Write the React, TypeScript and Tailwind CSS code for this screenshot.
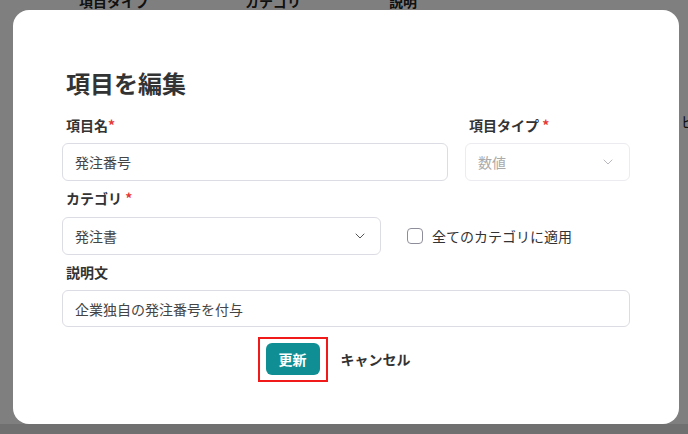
import { ChevronDown } from "lucide-react";

export default function App() {
  return (
    <div className="relative w-[688px] h-[434px] overflow-hidden bg-white font-['Noto_Sans_CJK_JP',sans-serif]">
      <div className="flex h-full flex-col">
        <div className="-mt-[9px] flex text-sm font-bold leading-5 text-[#222] whitespace-nowrap">
          <span className="ml-[79px]">項目タイプ</span>
          <span className="ml-[96px]">カテゴリ</span>
          <span className="ml-[88px]">説明</span>
        </div>
        <div className="mt-[100px] pl-[681px] whitespace-nowrap text-sm leading-5 text-[#222]">ピー</div>
        <div className="flex-1" />
        <div className="h-[10px] bg-[#e0e0e0]" />
      </div>

      <div className="absolute inset-0 flex items-center bg-black/50">
        <div className="ml-[13px] h-[414px] w-[666px] rounded-[16px] bg-white px-[49px] pt-[57px]">
          <h1 className="pl-1 text-2xl font-bold leading-8 text-[#333]">項目を編集</h1>

          <div className="mt-4 flex gap-[17px]">
            <div className="flex-1">
              <div className="pl-1 text-sm font-bold leading-5 text-[#333]">
                項目名<span className="text-[#e53935]">*</span>
              </div>
              <div className="mt-2 flex h-[38px] items-center rounded-md border border-[#dcdce4] px-3 text-sm text-[#444]">
                発注番号
              </div>
            </div>
            <div className="w-[165px]">
              <div className="pl-1 text-sm font-bold leading-5 text-[#333]">
                項目タイプ <span className="text-[#e53935]">*</span>
              </div>
              <div className="mt-2 flex h-[38px] items-center justify-between rounded-md border border-[#ececf0] pl-3 pr-[13px] text-sm text-[#aaa]">
                <span>数値</span>
                <ChevronDown size={16} strokeWidth={1.5} className="text-[#b8b8c0]" />
              </div>
            </div>
          </div>

          <div className="mt-[7px] pl-1 text-sm font-bold leading-5 text-[#333]">
            カテゴリ <span className="text-[#e53935]">*</span>
          </div>
          <div className="mt-[9px] flex items-center">
            <div className="flex h-[38px] w-[319px] items-center justify-between rounded-md border border-[#dcdce4] pl-3 pr-[12px] text-sm text-[#444]">
              <span>発注書</span>
              <ChevronDown size={16} strokeWidth={1.5} className="text-[#555]" />
            </div>
            <label className="ml-[26px] flex items-center gap-[9px] text-sm text-[#333]">
              <span className="h-[16px] w-[16px] rounded-[4px] border-[1.5px] border-[#8e8e9a] bg-white" />
              全てのカテゴリに適用
            </label>
          </div>

          <div className="mt-[7px] pl-1 text-sm font-bold leading-5 text-[#333]">説明文</div>
          <div className="mt-2 flex h-[37px] items-center rounded-md border border-[#dcdce4] px-3 text-sm text-[#444]">
            企業独自の発注番号を付与
          </div>

          <div className="mt-4 flex justify-center gap-[5px]">
            <div className="relative">
              <button className="h-[32px] w-[54px] rounded-md bg-[#0f8f94] text-sm font-bold text-white">更新</button>
              <div className="pointer-events-none absolute -left-[8px] -right-[8px] -top-[6px] -bottom-[7px] border-2 border-[#f01a1a]" />
            </div>
            <button className="h-[32px] px-4 text-sm font-bold text-[#333]">キャンセル</button>
          </div>
        </div>
      </div>
    </div>
  );
}
